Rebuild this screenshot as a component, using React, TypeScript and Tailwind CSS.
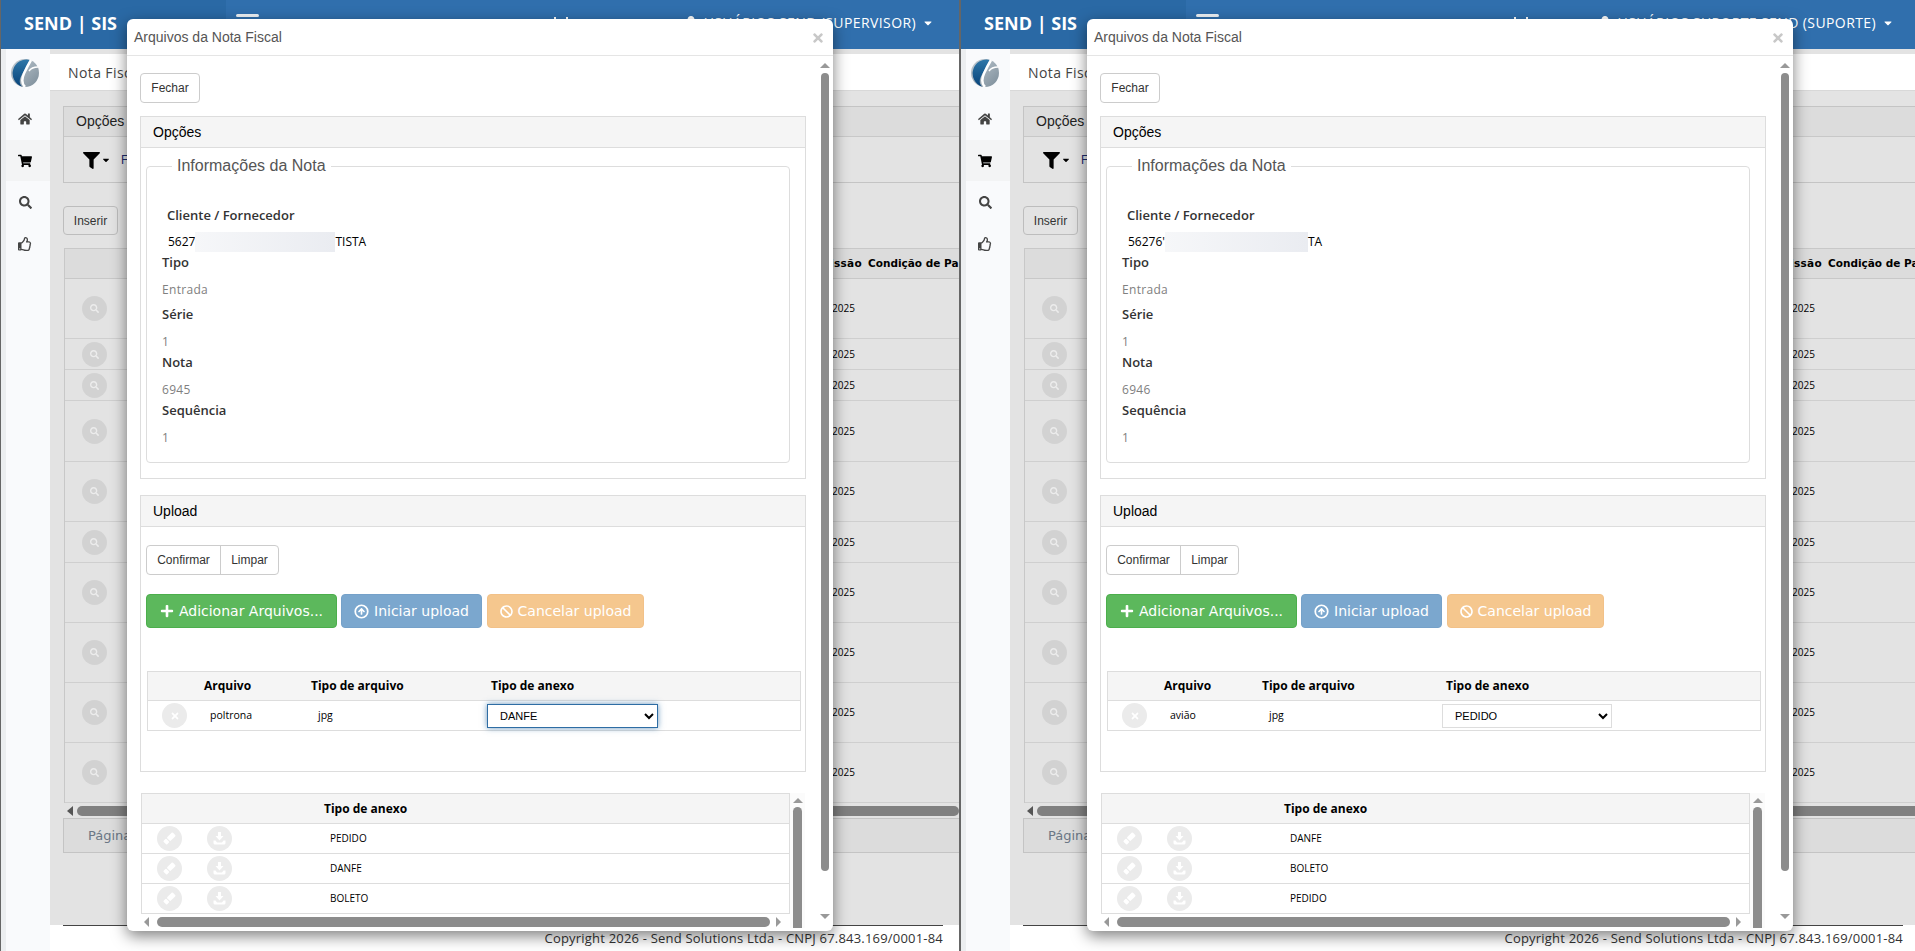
import { CircleArrowUp } from "lucide-react";
import {
  FaBan,
  FaCaretDown,
  FaFilter,
  FaHome,
  FaPlus,
  FaRegThumbsUp,
  FaSearch,
  FaShoppingCart,
  FaTimes,
  FaUser,
} from "react-icons/fa";

type PaneProps = {
  id: string;
  user: string;
  nota: string;
  clientStart: string;
  clientEnd: string;
  blurWidth: string;
  file: string;
  anexo: string;
  focused: boolean;
  col2: string;
  col3: string;
  selectWidth: string;
  attachments: string[];
};

const rowHeights = [
  "h-[60px]",
  "h-[31px]",
  "h-[31px]",
  "h-[61px]",
  "h-[60px]",
  "h-[41px]",
  "h-[60px]",
  "h-[60px]",
  "h-[60px]",
  "h-[60px]",
];

function Logo({ id }: { id: string }) {
  return (
    <svg width="28" height="28" viewBox="0 0 28 28">
      <defs>
        <linearGradient id={`${id}-blue`} x1="0" y1="0" x2="0" y2="1">
          <stop offset="0" stopColor="#2f77a8" />
          <stop offset="1" stopColor="#07437a" />
        </linearGradient>
        <linearGradient id={`${id}-gray`} x1="0" y1="0" x2="1" y2="1">
          <stop offset="0" stopColor="#c3ccd3" />
          <stop offset="1" stopColor="#7b8c99" />
        </linearGradient>
      </defs>
      <circle cx="14" cy="14" r="14" fill={`url(#${id}-gray)`} />
      <path d="M19 0.9A14 14 0 0 0 11 27.7C7 23 9 19 11.5 14.5 14 10 16.5 6 19 0.9z" fill={`url(#${id}-blue)`} />
      <path d="M20 1C17 6 15 10 13 14.5 11 19 10 24 14 28" fill="none" stroke="white" strokeWidth="2.5" />
      <path d="M18 12c2-3 5-4 9-4" fill="none" stroke="white" strokeWidth="1.5" />
    </svg>
  );
}

function SidebarIcons() {
  return (
    <div className="flex flex-col text-[#444]">
      <div className="h-[81px] w-full flex items-center justify-center pt-[39px] pr-[6px]"><FaHome size={14} /></div>
      <div className="h-[41px] w-full flex items-center justify-center pr-[6px] bg-[#f3f4f5] text-black"><FaShoppingCart size={14} /></div>
      <div className="h-[42px] w-full flex items-center justify-center pr-[6px]"><FaSearch size={13} /></div>
      <div className="h-[42px] w-full flex items-center justify-center pr-[6px]"><FaRegThumbsUp size={14} /></div>
    </div>
  );
}

function Background({ id, user }: { id: string; user: string }) {
  return (
    <div className="flex flex-col h-full">
      {/* top bar */}
      <div className="h-[49px] shrink-0 flex bg-[#306fad] text-white">
        <div className="w-[225px] shrink-0 bg-[#2a69a5] flex items-center pl-[23px] pb-[3px] font-['Open_Sans',sans-serif] text-[18px] font-bold whitespace-nowrap">
          SEND | SIS
        </div>
        <div className="pl-[10px] pt-[14px]">
          <div className="w-[23px] h-[3px] rounded-sm bg-[#eef2f6]" />
        </div>
        <div className="ml-[295px] pt-[17px] flex gap-[10px]">
          <div className="w-[2px] h-[2px] bg-white" />
          <div className="w-[2px] h-[2px] bg-white" />
        </div>
        <div className="ml-auto flex items-center gap-[6px] pr-[25px] pb-[4px] font-['Open_Sans',sans-serif] text-[14px] tracking-[0.4px] whitespace-nowrap">
          <FaUser size={14} />
          <span>{user}</span>
          <FaCaretDown size={12} />
        </div>
      </div>

      <div className="flex-1 flex min-h-0">
        {/* sidebar */}
        <div className="w-[5px] shrink-0 bg-[#eceef0]" />
        <div className="w-[44px] shrink-0 bg-[#f9fafc] flex flex-col">
          <div className="h-0 pl-[5px] pt-[10px]"><Logo id={id} /></div>
          <SidebarIcons />
        </div>

        {/* page */}
        <div className="flex-1 min-w-0 flex flex-col bg-[#e3e3e3]">
          <div className="h-[5px] shrink-0" />
          <div className="h-[37px] shrink-0 bg-white border-b border-[#d8d8d8] pl-[18px] flex items-center text-[14px] text-[#444] tracking-[0.4px] font-['Open_Sans',sans-serif]">
            Nota Fiscal
          </div>
          <div className="flex-1 flex flex-col pl-[13px]">
            <div className="mt-[15px] h-[77px] border border-[#c4c4c4] border-r-0">
              <div className="h-[30px] bg-[#dcdcdc] border-b border-[#c8c8c8] pl-[12px] flex items-center text-[14px] text-[#222] font-['Liberation_Sans',sans-serif]">Opções</div>
              <div className="h-[46px] flex items-center pl-[19px] gap-[1px] text-black">
                <FaFilter size={17} />
                <FaCaretDown size={10} />
                <span className="ml-[9px] text-[12px] text-[#1a2a6c] font-['Liberation_Sans',sans-serif]">Filtros</span>
              </div>
            </div>
            <div className="mt-[23px] w-[55px] h-[29px] border border-[#bdbdbd] rounded-[4px] flex items-center justify-center text-[12px] text-[#333] font-['Liberation_Sans',sans-serif]">Inserir</div>
            <div className="mt-[13px] border-l border-[#c8c8c8] ml-[1px]">
              <div className="h-[31px] flex items-center bg-[#dcdcdc] border-y border-[#c8c8c8] font-['DejaVu_Sans',sans-serif] text-[10.5px] font-bold text-black whitespace-nowrap overflow-hidden">
                <div className="w-[716px] shrink-0" />
                <div className="w-[87px] shrink-0 text-right pr-[6px] tracking-[0.3px]">Emissão</div>
                <div>Condição de Pa</div>
              </div>
              {rowHeights.map((h, i) => (
                <div key={i} className={`${h} flex items-center border-b border-[#cfcfcf]`}>
                  <div className="w-[58px] shrink-0 flex justify-center">
                    <div className="w-[25px] h-[25px] rounded-full bg-[#d2d2d2] flex items-center justify-center text-[#ececec]"><FaSearch size={9} /></div>
                  </div>
                  <div className="w-[658px] shrink-0" />
                  <div className="w-[74px] shrink-0 text-right font-['Open_Sans',sans-serif] text-[10px] text-black">12/2025</div>
                </div>
              ))}
            </div>
            <div className="h-[10px] mt-[3px] flex items-center">
              <div className="w-0 h-0 border-y-[5px] border-y-transparent border-r-[6px] border-r-[#555] ml-[4px]" />
              <div className="ml-[4px] flex-1 h-[10px] rounded-full bg-[#808080]" />
            </div>
            <div className="mt-[2px] h-[35px] border border-[#c4c4c4] border-r-0 bg-[#dcdcdc] flex items-center pl-[24px] font-['DejaVu_Sans',sans-serif] text-[13px] text-[#6b7785]">
              Página
            </div>
            <div className="flex-1" />
            <div className="h-[26px] shrink-0 -ml-[13px] bg-white">
              <div className="ml-[13px] mr-[16px] border-t border-[#444] text-right font-['Open_Sans',sans-serif] text-[13px] leading-[24px] text-[#333] tracking-[0.2px] whitespace-nowrap">
                Copyright 2026 - Send Solutions Ltda - CNPJ 67.843.169/0001-84
              </div>
            </div>
          </div>
        </div>
      </div>
    </div>
  );
}

function Field({ label, value, extra }: { label: string; value: string; extra?: string }) {
  return (
    <div className={extra}>
      <div className="h-[22px] flex items-center text-[13px] font-semibold text-[#333] font-['Open_Sans',sans-serif]">{label}</div>
      <div className="h-[26px] pt-[5px] flex items-center text-[12px] text-[#808080] font-['Open_Sans',sans-serif] tracking-[0.3px]">{value}</div>
    </div>
  );
}

function PanelHeader({ title }: { title: string }) {
  return (
    <div className="h-[31px] bg-[#f5f5f5] border-b border-[#ddd] pl-[12px] flex items-center text-[14px] text-black font-['Liberation_Sans',sans-serif]">
      {title}
    </div>
  );
}

function RowCircle({ children }: { children: React.ReactNode }) {
  return (
    <div className="w-[25px] h-[25px] rounded-full bg-[#ebebeb] flex items-center justify-center text-white">{children}</div>
  );
}

function EraseIcon() {
  return (
    <svg width="13" height="13" viewBox="0 0 13 13" fill="white">
      <g transform="rotate(45 6.5 6.5)">
        <rect x="4" y="0" width="5" height="8" rx="1" />
        <rect x="4" y="9" width="5" height="4" rx="0.8" />
      </g>
    </svg>
  );
}

function SaveIcon() {
  return (
    <svg width="13" height="13" viewBox="0 0 13 13" fill="white">
      <path d="M5 0h3v4h2.5L6.5 8.5 2.5 4H5z" />
      <path d="M0.5 8.5h2l1.5 2h5l1.5-2h2v2.5a1.5 1.5 0 0 1-1.5 1.5h-9A1.5 1.5 0 0 1 0.5 11z" />
    </svg>
  );
}

function Modal(p: PaneProps) {
  return (
    <div className="absolute left-[126px] top-[19px] w-[706px] h-[912px] bg-white rounded-[6px] shadow-[0_5px_15px_rgba(0,0,0,0.5)] flex flex-col overflow-hidden">
      <div className="h-[37px] shrink-0 border-b border-[#e5e5e5] flex items-center justify-between pl-[7px] pr-[8px] text-[14px] text-[#555] font-['Liberation_Sans',sans-serif]">
        <span>Arquivos da Nota Fiscal</span>
        <FaTimes size={14} className="text-[#c8c8c8] mt-[2px]" />
      </div>

      <div className="h-[872px] shrink-0 flex overflow-hidden">
        <div className="w-[690px] shrink-0 pl-[13px]">
          <div className="mt-[17px] w-[60px] h-[30px] border border-[#ccc] rounded-[4px] flex items-center justify-center text-[12px] text-[#333] font-['Liberation_Sans',sans-serif]">Fechar</div>

          {/* Opções */}
          <div className="mt-[13px] w-[666px] h-[363px] border border-[#ddd]">
            <PanelHeader title="Opções" />
            <div className="px-[5px]">
              <fieldset className="mt-[8px] w-[644px] h-[307px] border border-[#ddd] rounded-[4px]">
                <legend className="ml-[25px] px-[5px] text-[16px] leading-[20px] text-[#555] font-['Liberation_Sans',sans-serif]">Informações da Nota</legend>
                <div className="pl-[20px] mt-[29px] h-[22px] flex items-center text-[13px] font-semibold text-[#333] font-['Open_Sans',sans-serif]">Cliente / Fornecedor</div>
                <div className="pl-[21px] mt-[5px] h-[20px] flex items-center text-[12px] text-black font-['Open_Sans',sans-serif] whitespace-nowrap">
                  <span>{p.clientStart}</span>
                  <div className={`${p.blurWidth} h-[20px] bg-gradient-to-r from-[#f6f7f9] to-[#eaecf1]`} />
                  <span>{p.clientEnd}</span>
                </div>
                <div className="pl-[15px]">
                  <Field label="Tipo" value="Entrada" extra="mb-[4px]" />
                  <Field label="Série" value="1" />
                  <Field label="Nota" value={p.nota} />
                  <Field label="Sequência" value="1" />
                </div>
              </fieldset>
            </div>
          </div>

          {/* Upload */}
          <div className="mt-[16px] w-[666px] h-[277px] border border-[#ddd]">
            <PanelHeader title="Upload" />
            <div className="px-[5px]">
              <div className="mt-[18px] h-[30px] inline-flex border border-[#ccc] rounded-[4px] text-[12px] text-[#333] font-['Liberation_Sans',sans-serif]">
                <div className="w-[74px] flex items-center justify-center border-r border-[#ccc]">Confirmar</div>
                <div className="w-[57px] flex items-center justify-center">Limpar</div>
              </div>
              <div className="mt-[19px] flex gap-[4px] h-[34px] text-white text-[14px] font-['DejaVu_Sans',sans-serif] whitespace-nowrap">
                <div className="w-[191px] bg-[#5cb85c] rounded-[4px] border border-[#4cae4c] flex items-center justify-center gap-[5px]"><FaPlus size={14} />Adicionar Arquivos...</div>
                <div className="w-[141px] bg-[#7ba7ce] rounded-[4px] border border-[#75a1c9] flex items-center justify-center gap-[5px]"><CircleArrowUp size={15} strokeWidth={2.75} />Iniciar upload</div>
                <div className="ml-[1px] w-[157px] bg-[#f5c78e] rounded-[4px] border border-[#f2c188] flex items-center justify-center gap-[5px]"><FaBan size={13} />Cancelar upload</div>
              </div>
              <div className="mt-[43px] ml-[1px] w-[654px] border border-[#ddd] font-['Open_Sans',sans-serif] text-[10.5px] text-black">
                <div className="h-[29px] bg-[#f5f5f5] border-b border-[#ddd] flex items-center font-bold text-[12px]">
                  <div className="w-[50px] shrink-0" />
                  <div className={`${p.col2} shrink-0 pl-[6px]`}>Arquivo</div>
                  <div className={`${p.col3} shrink-0 pl-[6px]`}>Tipo de arquivo</div>
                  <div className="pl-[10px]">Tipo de anexo</div>
                </div>
                <div className="h-[29px] flex items-center">
                  <div className="w-[50px] shrink-0 flex justify-center pl-[3px]"><RowCircle><FaTimes size={10} /></RowCircle></div>
                  <div className={`${p.col2} shrink-0 pl-[12px]`}>{p.file}</div>
                  <div className={`${p.col3} shrink-0 pl-[13px]`}>jpg</div>
                  <div className="pl-[6px]">
                    <select
                      defaultValue={p.anexo}
                      className={`${p.selectWidth} h-[24px] pl-[8px] bg-white text-[11px] text-black font-['Liberation_Sans',sans-serif] border ${p.focused ? "border-[#2e6da4] shadow-[0_0_6px_rgba(46,109,164,0.7)]" : "border-[#ddd]"}`}
                    >
                      <option>PEDIDO</option>
                      <option>DANFE</option>
                      <option>BOLETO</option>
                    </select>
                  </div>
                </div>
              </div>
            </div>
          </div>

          {/* Anexos */}
          <div className="mt-[21px] ml-[1px] w-[664px] flex">
            <div className="w-[649px] shrink-0">
              <div className="border-t border-x border-[#ddd] font-['Open_Sans',sans-serif] text-[10.5px] text-black">
                <div className="h-[30px] bg-[#f5f5f5] border-b border-[#ddd] flex items-center pl-[182px] font-bold text-[12px]">Tipo de anexo</div>
                {p.attachments.map((a) => (
                  <div key={a} className="h-[30px] border-b border-[#ddd] flex items-center">
                    <div className="w-[50px] shrink-0 pl-[15px]"><RowCircle><EraseIcon /></RowCircle></div>
                    <div className="w-[138px] shrink-0 pl-[15px]"><RowCircle><SaveIcon /></RowCircle></div>
                    <div className="text-[10px]">{a}</div>
                  </div>
                ))}
              </div>
              <div className="mt-[3px] h-[10px] flex items-center">
                <div className="ml-[3px] w-0 h-0 border-y-[5px] border-y-transparent border-r-[5px] border-r-[#999]" />
                <div className="ml-[8px] w-[613px] h-[10px] rounded-full bg-[#8c8c8c]" />
                <div className="ml-[6px] w-0 h-0 border-y-[5px] border-y-transparent border-l-[5px] border-l-[#999]" />
              </div>
            </div>
            <div className="w-[15px] shrink-0 bg-[#fbfbfb] flex flex-col items-center">
              <div className="mt-[5px] w-0 h-0 border-x-[5px] border-x-transparent border-b-[5px] border-b-[#999]" />
              <div className="mt-[4px] w-[9px] h-[140px] rounded-t-full bg-[#8c8c8c]" />
            </div>
          </div>
        </div>

        {/* scrollbar do modal */}
        <div className="w-[15px] shrink-0 flex flex-col items-center">
          <div className="mt-[7px] w-0 h-0 border-x-[5px] border-x-transparent border-b-[5px] border-b-[#999]" />
          <div className="mt-[5px] w-[8px] h-[798px] rounded-full bg-[#8c8c8c]" />
          <div className="mt-[43px] w-0 h-0 border-x-[5px] border-x-transparent border-t-[5px] border-t-[#999]" />
        </div>
      </div>
    </div>
  );
}

function Pane(p: PaneProps) {
  return (
    <div className="relative w-[960px] h-[951px] shrink-0 overflow-hidden border-x border-[#666]">
      <Background id={p.id} user={p.user} />
      <Modal {...p} />
    </div>
  );
}

export default function App() {
  return (
    <div className="flex w-[1915px] h-[951px] overflow-hidden bg-white">
      <Pane
        id="left"
        user="USUÁRIOS SEND (SUPERVISOR)"
        nota="6945"
        clientStart="5627"
        clientEnd="TISTA"
        blurWidth="w-[140px]"
        file="poltrona"
        anexo="DANFE"
        focused
        col2="w-[107px]"
        col3="w-[176px]"
        selectWidth="w-[171px]"
        attachments={["PEDIDO", "DANFE", "BOLETO"]}
      />
      <Pane
        id="right"
        user="USUÁRIOS SUPORTE SEND (SUPORTE)"
        nota="6946"
        clientStart="56276'"
        clientEnd="TA"
        blurWidth="w-[143px]"
        file="avião"
        anexo="PEDIDO"
        focused={false}
        col2="w-[98px]"
        col3="w-[180px]"
        selectWidth="w-[170px]"
        attachments={["DANFE", "BOLETO", "PEDIDO"]}
      />
    </div>
  );
}
